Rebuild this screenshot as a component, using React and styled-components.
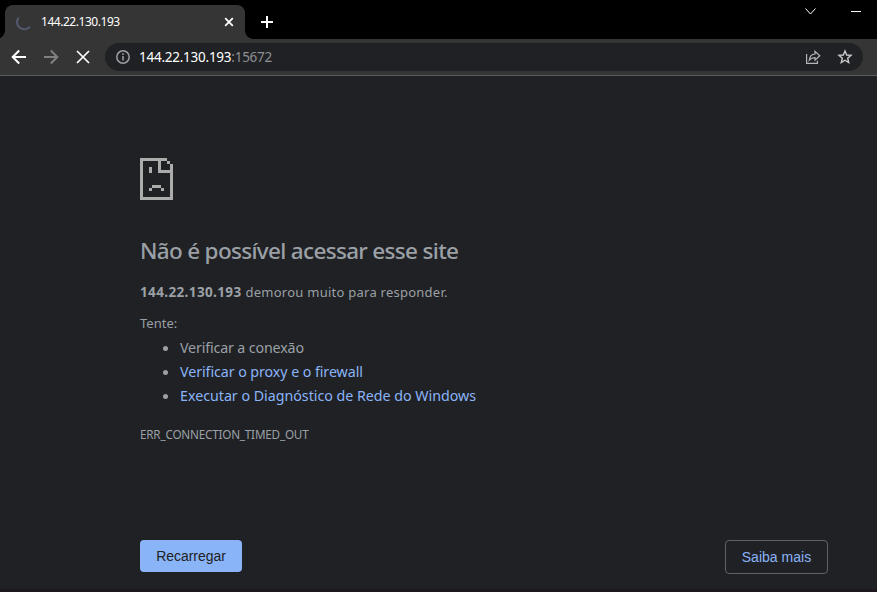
import React from "react";
import styled, { createGlobalStyle } from "styled-components";

const GlobalStyle = createGlobalStyle`
  * { box-sizing: border-box; }
  body { margin: 0; background: #202124; overflow: hidden; }
  button { font: inherit; margin: 0; }
`;

const Window = styled.div`
  display: flex;
  flex-direction: column;
  width: 877px;
  height: 592px;
  background: #202124;
  border-bottom: 3px solid #1e171d;
  font-family: "Noto Sans", "Open Sans", sans-serif;
`;

const TabStrip = styled.header`
  display: flex;
  height: 39px;
  padding: 5px 15px 0 5px;
  background: #000;
`;

const Tab = styled.div`
  position: relative;
  display: flex;
  align-items: center;
  width: 240px;
  height: 34px;
  padding: 0 10px 0 11px;
  border-radius: 8px 8px 0 0;
  background: #353535;

  &::before,
  &::after {
    content: "";
    position: absolute;
    bottom: 0;
    width: 8px;
    height: 8px;
  }
  &::before {
    left: -8px;
    background: radial-gradient(circle at 0 0, transparent 7.5px, #353535 8px);
  }
  &::after {
    right: -8px;
    background: radial-gradient(circle at 100% 0, transparent 7.5px, #353535 8px);
  }
`;

const Text = styled.span`
  white-space: nowrap;
  font-size: ${(p) => p.$size}px;
  font-weight: ${(p) => p.$weight || 400};
  letter-spacing: ${(p) => p.$track || 0}px;
  color: ${(p) => p.$color || "#9aa0a6"};
`;

const TabTitle = styled(Text)`
  flex: 1;
  margin: -2px 0 0 9px;
`;

const Icon = styled.svg`
  display: block;
  flex: none;
  overflow: visible;
  fill: none;
  stroke: ${(p) => p.$color || "#fff"};
  stroke-width: ${(p) => p.$stroke || 2};
`;

const NewTab = styled.div`
  margin: 11px 0 0 16px;
`;

const WindowControls = styled.div`
  display: flex;
  gap: 35px;
  margin-left: auto;
  margin-right: 1px;
`;

const Toolbar = styled.nav`
  display: flex;
  align-items: center;
  height: 37px;
  padding: 0 14px 1px 11px;
  background: #353535;
  border-bottom: 1px solid #5b5c5e;
`;

const NavButtons = styled.div`
  display: flex;
  gap: 16px;
`;

const AddressBar = styled.div`
  display: flex;
  align-items: center;
  flex: 1;
  height: 28px;
  margin-left: 14px;
  padding: 0 10px 0 10px;
  border-radius: 14px;
  background: #202124;
`;

const Url = styled.div`
  display: flex;
  flex: 1;
  margin-left: 8px;
`;

const AddressActions = styled.div`
  display: flex;
  gap: 16px;
`;

const ErrorPage = styled.main`
  display: flex;
  flex-direction: column;
  flex: 1;
  padding: 82px 49px 0 140px;
`;

const Heading = styled.h1`
  margin: 35px 0 0;
  height: 32px;
  line-height: 32px;
  font-size: 0;
`;

const Summary = styled.p`
  display: flex;
  gap: 4px;
  margin: 15px 0 0;
  height: 20px;
  line-height: 20px;
`;

const Hint = styled.p`
  margin: 11px 0 0;
  height: 20px;
  line-height: 20px;
  font-size: 0;
`;

const Suggestions = styled.ul`
  margin: 3px 0 0;
  padding: 0;
  list-style: none;
`;

const Suggestion = styled.li`
  display: flex;
  align-items: center;
  height: 24px;
  line-height: 24px;
  padding-left: 23px;

  &::before {
    content: "";
    width: 5px;
    height: 5px;
    margin: 1px 12px 0 0;
    border-radius: 50%;
    background: #9aa0a6;
  }
`;

const ErrorCode = styled.div`
  margin-top: 16px;
  height: 20px;
  line-height: 20px;
  font-size: 0;
`;

const Actions = styled.div`
  display: flex;
  justify-content: space-between;
  align-items: flex-start;
  margin-top: 96px;
`;

const Button = styled.button`
  width: ${(p) => (p.$primary ? 102 : 103)}px;
  height: ${(p) => (p.$primary ? 32 : 34)}px;
  padding: 0;
  border: ${(p) => (p.$primary ? "0" : "1px solid #5f6368")};
  border-radius: 4px;
  background: ${(p) => (p.$primary ? "#8ab4f8" : "transparent")};
  color: ${(p) => (p.$primary ? "#202124" : "#8ab4f8")};
  font-family: "Liberation Sans", Arial, sans-serif;
  font-size: 14px;
  letter-spacing: ${(p) => (p.$primary ? -0.05 : 0.02)}px;
`;

const LINK = "#8ab4f8";

const suggestions = [
  { text: "Verificar a conexão", track: -0.15 },
  { text: "Verificar o proxy e o firewall", track: -0.07, color: LINK },
  { text: "Executar o Diagnóstico de Rede do Windows", track: -0.02, color: LINK },
];

const SadPage = () => (
  <Icon width="33" height="42" viewBox="0 0 33 42" $color="none">
    <path
      fill="#acacac"
      fillRule="evenodd"
      d="M0 0H27V3H30V6H33V42H0ZM3 3V39H30V15H18V3ZM21 3V12H30V6H27V3Z"
    />
    <path fill="#acacac" d="M9 9h3v6H9zM12 27h9v3h-9zM9 30h3v3H9zM21 30h3v3h-3z" />
  </Icon>
);

export default function App() {
  return (
    <>
      <GlobalStyle />
      <Window>
        <TabStrip>
          <Tab>
            <Icon width="16" height="16" viewBox="0 0 16 16" $color="#535a70">
              <path d="M2.6 3.6A7 7 0 0 0 14 12.6" />
            </Icon>
            <TabTitle $size={12} $track={-0.46} $color="#fff">144.22.130.193</TabTitle>
            <Icon width="12" height="12" viewBox="0 0 12 12" $stroke={1.8}>
              <path d="M2.2 2.2 9.8 9.8M9.8 2.2 2.2 9.8" />
            </Icon>
          </Tab>
          <NewTab>
            <Icon width="12" height="12" viewBox="0 0 12 12">
              <path d="M6 0V12M0 6H12" />
            </Icon>
          </NewTab>
          <WindowControls>
            <Icon width="11" height="12" viewBox="0 0 11 12" $stroke={1}>
              <path d="M.5 3.5 5.5 9 10.5 3.5" />
            </Icon>
            <Icon width="10" height="12" viewBox="0 0 10 12" $stroke={1}>
              <path d="M0 6.5H10" />
            </Icon>
          </WindowControls>
        </TabStrip>
        <Toolbar>
          <NavButtons>
            <Icon width="16" height="16" viewBox="0 0 16 16">
              <path d="M15 8H2M8.2 1.5 1.7 8 8.2 14.5" />
            </Icon>
            <Icon width="16" height="16" viewBox="0 0 16 16" $color="#808080">
              <path d="M1 8H14M7.8 1.5 14.3 8 7.8 14.5" />
            </Icon>
            <Icon width="16" height="16" viewBox="0 0 16 16" $stroke={1.7}>
              <path d="M2 2 14 14M14 2 2 14" />
            </Icon>
          </NavButtons>
          <AddressBar>
            <Icon width="16" height="16" viewBox="0 0 16 16" $color="#9aa0a6" $stroke={1.5}>
              <circle cx="8" cy="8" r="6.2" />
              <path d="M8 7V11.5M8 4.3V5.9" />
            </Icon>
            <Url>
              <Text $size={13.5} $track={-0.25} $color="#fff">144.22.130.193</Text>
              <Text $size={13.5} $track={-0.25} $color="#8d8f92">:15672</Text>
            </Url>
            <AddressActions>
              <Icon width="16" height="16" viewBox="0 0 16 16" $color="#b4b7b9" $stroke={1.2}>
                <path d="M1.6 5V14.3H12.4V11.8M10 2.4V5C6 5.2 4.7 7.5 4.3 11 6 9 7.5 8.6 10 8.6V11.2L14.8 6.8Z" />
              </Icon>
              <Icon width="16" height="16" viewBox="0 0 16 16" $color="#c8cacc" $stroke={1.4}>
                <path d="M8 2 9.7 6 14 6.4 10.7 9.2 11.7 13.5 8 11.2 4.3 13.5 5.3 9.2 2 6.4 6.3 6Z" />
              </Icon>
            </AddressActions>
          </AddressBar>
        </Toolbar>
        <ErrorPage>
          <SadPage />
          <Heading>
            <Text $size={22.5} $weight={500} $track={-0.68}>Não é possível acessar esse site</Text>
          </Heading>
          <Summary>
            <Text $size={13.5} $weight={700} $track={0.37}>144.22.130.193</Text>
            <Text $size={13} $track={0.25}>demorou muito para responder.</Text>
          </Summary>
          <Hint>
            <Text $size={13}>Tente:</Text>
          </Hint>
          <Suggestions>
            {suggestions.map((s) => (
              <Suggestion key={s.text}>
                <Text $size={14.25} $track={s.track} $color={s.color}>{s.text}</Text>
              </Suggestion>
            ))}
          </Suggestions>
          <ErrorCode>
            <Text $size={11.7} $track={-0.2}>ERR_CONNECTION_TIMED_OUT</Text>
          </ErrorCode>
          <Actions>
            <Button $primary>Recarregar</Button>
            <Button>Saiba mais</Button>
          </Actions>
        </ErrorPage>
      </Window>
    </>
  );
}
